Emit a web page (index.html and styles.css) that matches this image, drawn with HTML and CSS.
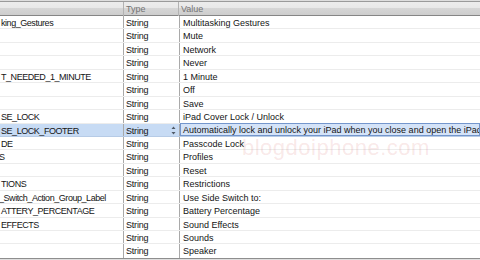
FILE: index.html
```html
<!DOCTYPE html>
<html lang="en">
<head>
    <meta charset="UTF-8">
    <title>Localizable.strings</title>
    <link rel="stylesheet" href="styles.css">
</head>
<body>
    <div class="editor">
        <div class="header">
            <div class="hcell"></div>
            <div class="hcell">Type</div>
            <div class="hcell">Value</div>
        </div>
        <div class="rows">
            <div class="row"><div class="key">king_Gestures</div><div class="type">String</div><div class="value">Multitasking Gestures</div></div>
            <div class="row"><div class="key"></div><div class="type">String</div><div class="value">Mute</div></div>
            <div class="row"><div class="key"></div><div class="type">String</div><div class="value">Network</div></div>
            <div class="row"><div class="key"></div><div class="type">String</div><div class="value">Never</div></div>
            <div class="row"><div class="key">T_NEEDED_1_MINUTE</div><div class="type">String</div><div class="value">1 Minute</div></div>
            <div class="row"><div class="key"></div><div class="type">String</div><div class="value">Off</div></div>
            <div class="row"><div class="key"></div><div class="type">String</div><div class="value">Save</div></div>
            <div class="row"><div class="key">SE_LOCK</div><div class="type">String</div><div class="value">iPad Cover Lock / Unlock</div></div>
            <div class="row selected">
                <div class="key">SE_LOCK_FOOTER</div>
                <div class="type">String
                    <svg class="stepper" width="5" height="9" viewBox="0 0 5 9"><path d="M2.5 0.5 L4.5 3 L0.5 3 Z M0.5 6 L4.5 6 L2.5 8.5 Z" fill="#505a66"/></svg>
                </div>
                <div class="value editing">Automatically lock and unlock your iPad when you close and open the iPad</div>
            </div>
            <div class="row"><div class="key">DE</div><div class="type">String</div><div class="value">Passcode Lock</div></div>
            <div class="row"><div class="key shifted">S</div><div class="type">String</div><div class="value">Profiles</div></div>
            <div class="row"><div class="key"></div><div class="type">String</div><div class="value">Reset</div></div>
            <div class="row"><div class="key">TIONS</div><div class="type">String</div><div class="value">Restrictions</div></div>
            <div class="row"><div class="key shifted">_Switch_Action_Group_Label</div><div class="type">String</div><div class="value">Use Side Switch to:</div></div>
            <div class="row"><div class="key">ATTERY_PERCENTAGE</div><div class="type">String</div><div class="value">Battery Percentage</div></div>
            <div class="row"><div class="key">EFFECTS</div><div class="type">String</div><div class="value">Sound Effects</div></div>
            <div class="row"><div class="key"></div><div class="type">String</div><div class="value">Sounds</div></div>
            <div class="row last"><div class="key"></div><div class="type">String</div><div class="value">Speaker</div></div>
        </div>
        <div class="watermark">blogdoiphone.com</div>
    </div>
</body>
</html>
```

FILE: styles.css
```css
body {
    margin: 0;
    background: #fff;
    font-family: 'Liberation Sans', Arial, sans-serif;
    font-size: 9px;
    color: #141414;
    overflow: hidden;
}
.editor {
    position: relative;
    width: 480px;
    height: 260px;
    overflow: hidden;
    padding-top: 1px;
    background: #dedede;
    box-sizing: border-box;
}
.header {
    display: grid;
    grid-template-columns: 124px 55px 1fr;
    height: 13px;
    border-top: 1px solid #9a9a9a;
    border-bottom: 1px solid #858585;
    background: linear-gradient(#ececec 0, #e8e8e8 6px, #d6d6d6 6px, #cdcdcd 13px);
}
.hcell {
    border-right: 1px solid #b2b2b2;
    padding-left: 2px;
    color: #747474;
    line-height: 14px;
}
.hcell:last-child {
    border-right: none;
}
.rows {
    background: #fff;
    border-bottom: 1px solid #8e8e8e;
}
.row {
    display: grid;
    grid-template-columns: 124px 56px 1fr;
    height: 13.45px;
    box-sizing: border-box;
    border-bottom: 1px solid #ececec;
    line-height: 14px;
    white-space: nowrap;
}
.row.last {
    border-bottom: none;
}
.key, .type {
    border-right: 1px solid #a9a9a9;
    overflow: hidden;
}
.key {
    padding-left: 1px;
    letter-spacing: -0.45px;
}
.key.shifted {
    text-indent: -2px;
}
.type {
    position: relative;
    padding-left: 2px;
    letter-spacing: -0.2px;
}
.value {
    padding-left: 3px;
    overflow: hidden;
}
.selected {
    background: #c7dbf4;
    border-bottom-color: #b6cbe6;
}
.value.editing {
    background: #d4e3f8;
    border: 1px solid #7496cc;
    margin-top: -1px;
    padding-left: 2px;
    line-height: 13px;
}
.stepper {
    position: absolute;
    right: 3px;
    top: 2px;
}
.watermark {
    position: absolute;
    left: 242px;
    top: 135px;
    font-size: 22px;
    letter-spacing: 0.5px;
    color: rgba(214, 90, 90, 0.15);
    pointer-events: none;
}
```
